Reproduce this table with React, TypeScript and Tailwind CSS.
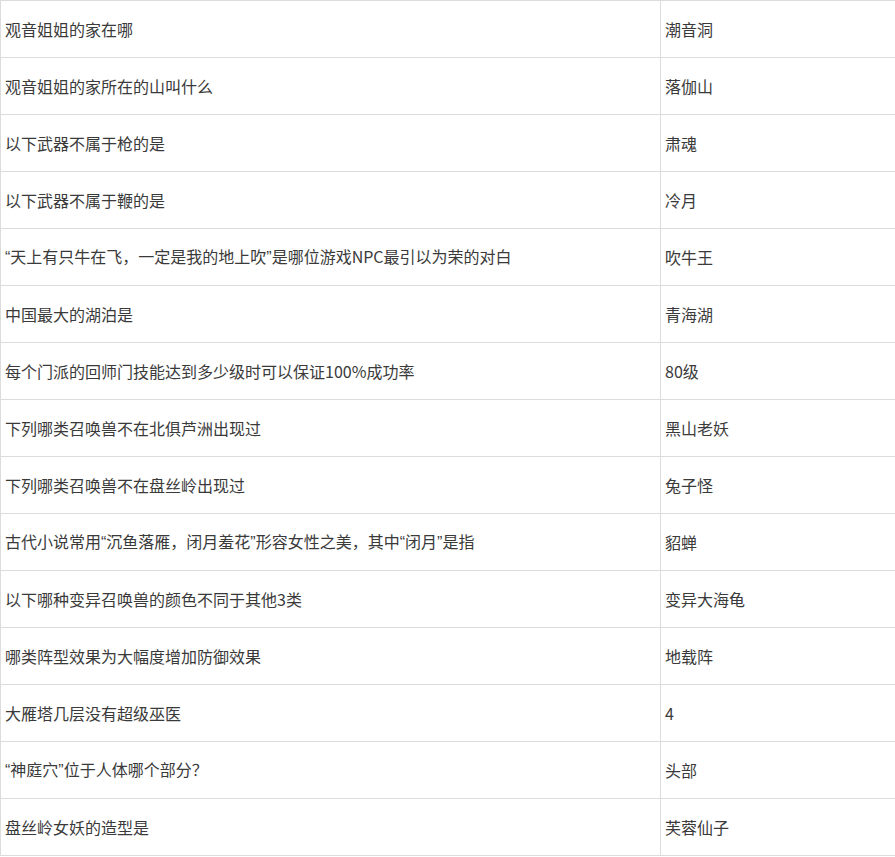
const rows: [string, string][] = [
  ['观音姐姐的家在哪', '潮音洞'],
  ['观音姐姐的家所在的山叫什么', '落伽山'],
  ['以下武器不属于枪的是', '肃魂'],
  ['以下武器不属于鞭的是', '冷月'],
  ['“天上有只牛在飞，一定是我的地上吹”是哪位游戏NPC最引以为荣的对白', '吹牛王'],
  ['中国最大的湖泊是', '青海湖'],
  ['每个门派的回师门技能达到多少级时可以保证100%成功率', '80级'],
  ['下列哪类召唤兽不在北俱芦洲出现过', '黑山老妖'],
  ['下列哪类召唤兽不在盘丝岭出现过', '兔子怪'],
  ['古代小说常用“沉鱼落雁，闭月羞花”形容女性之美，其中“闭月”是指', '貂蝉'],
  ['以下哪种变异召唤兽的颜色不同于其他3类', '变异大海龟'],
  ['哪类阵型效果为大幅度增加防御效果', '地载阵'],
  ['大雁塔几层没有超级巫医', '4'],
  ['“神庭穴”位于人体哪个部分？', '头部'],
  ['盘丝岭女妖的造型是', '芙蓉仙子'],
];

// curly quotes render narrow (Latin-width) in the original, so split them out
function Text({ value }: { value: string }) {
  const parts = value.split(/([“”])/);
  return (
    <span>
      {parts.map((p, i) =>
        p === '“' || p === '”' ? (
          <span key={i} className="font-['Liberation_Sans',sans-serif]">{p}</span>
        ) : (
          p
        )
      )}
    </span>
  );
}

export default function App() {
  return (
    <div className="w-[895px] h-[857px] overflow-hidden bg-white">
      <div className="w-[1000px] border-t border-l border-[#dcdcdc] font-['Microsoft_YaHei','Noto_Sans_CJK_SC',sans-serif] text-[16px] text-[#3a3a3a]">
        {rows.map(([q, a]) => (
          <div key={q} className="grid grid-cols-[660px_1fr] h-[57px] border-b border-[#dcdcdc]">
            <div className="flex items-center pl-[4px] border-r border-[#dcdcdc]">
              <Text value={q} />
            </div>
            <div className="flex items-center pl-[4px]">{a}</div>
          </div>
        ))}
      </div>
    </div>
  );
}
